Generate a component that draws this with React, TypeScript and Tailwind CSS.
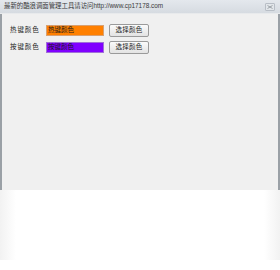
import React from "react";

const font = { fontFamily: '"Liberation Sans", "Noto Sans CJK SC", sans-serif' };

function Row({ label, color, border }: { label: string; color: string; border: string }) {
  return (
    <div className="flex items-center h-[13px]">
      <div className="w-[44px] pl-[8px] text-[6.5px] tracking-[0.9px] text-[#1a1a1a] leading-none whitespace-nowrap">{label}</div>
      <div
        className="w-[58px] h-[11px] border flex items-center pl-[1px] text-[6.5px] text-[#1a1a1a] leading-none whitespace-nowrap"
        style={{ backgroundColor: color, borderColor: border }}
      >
        {label}
      </div>
      <div className="ml-[5px] w-[40px] h-[13px] rounded-[2px] border border-[#9a9a9a] bg-gradient-to-b from-[#fbfbfb] to-[#e3e3e3] flex items-center justify-center text-[6.5px] tracking-[0.3px] text-[#1a1a1a] leading-none whitespace-nowrap">
        选择颜色
      </div>
    </div>
  );
}

export default function App() {
  return (
    <div className="w-[280px] h-[270px] bg-white relative overflow-hidden" style={font}>
      <div className="w-[280px] h-[190px] flex flex-col border-l-2 border-r-2 border-[#9aa0a6] bg-[#f0f0f0]">
        <div className="h-[14px] flex items-center justify-between bg-gradient-to-b from-[#e4e8ed] to-[#d6dbe1] border-b border-[#e8eaec] -mx-[2px] px-[4px]">
          <div className="text-[6.4px] text-[#3a3a3a] leading-none whitespace-nowrap">最新的酷浪调面管理工具请访问http://www.cp17178.com</div>
          <div className="w-[10px] h-[8px] mr-[1px] rounded-[1px] border border-[#b8bec6] bg-[#e2e6ea] flex items-center justify-center">
            <svg width="6" height="4" viewBox="0 0 6 4">
              <path d="M0.5 0.5 L5.5 3.5 M5.5 0.5 L0.5 3.5" stroke="#8a9098" strokeWidth="0.8" />
            </svg>
          </div>
        </div>
        <div className="flex flex-col gap-[4px] pt-[10px]">
          <Row label="热键颜色" color="#ff8000" border="#d8a070" />
          <Row label="按键颜色" color="#8000ff" border="#a070d8" />
        </div>
      </div>
      <div className="flex h-[70px]">
        <div className="w-[16px] bg-gradient-to-r from-[#f2f2f2] to-white" />
        <div className="flex-1" />
        <div className="w-[16px] bg-gradient-to-l from-[#f2f2f2] to-white" />
      </div>
    </div>
  );
}
